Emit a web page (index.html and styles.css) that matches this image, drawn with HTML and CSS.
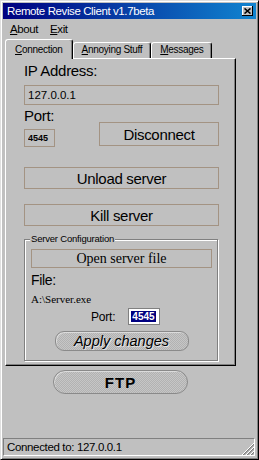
FILE: index.html
```html
<!DOCTYPE html>
<html>
<head>
	<title>Remote Revise Client v1.7beta</title>
	<link rel="stylesheet" href="styles.css">
</head>
<body>
	<div class="window">
		<div class="titlebar">
			<span class="title">Remote Revise Client v1.7beta</span>
			<button type="button" class="close">
				<svg width="7" height="6" viewBox="0 0 7 6"><path d="M0.5 0.5L6.5 5.5M6.5 0.5L0.5 5.5" stroke="#000" stroke-width="1.6" /></svg>
			</button>
		</div>
		<div class="menubar">
			<span class="menu"><u>A</u>bout</span>
			<span class="menu"><u>E</u>xit</span>
		</div>
		<div class="tabs">
			<span class="tab active"><u>C</u>onnection</span>
			<span class="tab"><u>A</u>nnoying Stuff</span>
			<span class="tab"><u>M</u>essages</span>
		</div>
		<div class="panel">
			<div class="label">IP Address:</div>
			<input class="field ip" value="127.0.0.1">
			<div class="portrow">
				<div>
					<div class="label">Port:</div>
					<input class="field port" value="4545">
				</div>
				<button type="button" class="flat disconnect">Disconnect</button>
			</div>
			<button type="button" class="flat wide unload">Unload server</button>
			<button type="button" class="flat wide kill">Kill server</button>
			<fieldset class="config">
				<legend>Server Configuration</legend>
				<button type="button" class="flat open">Open server file</button>
				<div class="file">File:</div>
				<div class="path">A:\Server.exe</div>
				<div class="cfgport">
					<span>Port:</span>
					<span class="box"><mark>4545</mark></span>
				</div>
				<button type="button" class="pill apply">Apply changes</button>
			</fieldset>
		</div>
		<div class="below">
			<button type="button" class="pill ftp">FTP</button>
		</div>
		<div class="status">
			<span>Connected to: 127.0.0.1</span>
			<svg class="grip" width="12" height="12" viewBox="0 0 12 12">
				<path d="M12 1L1 12M12 5L5 12M12 9L9 12" stroke="#808080" stroke-width="1.4" />
				<path d="M12 0L0 12M12 4L4 12M12 8L8 12" stroke="#fff" stroke-width="1" />
			</svg>
		</div>
	</div>
</body>
</html>
```

FILE: styles.css
```css
body {
	margin: 0;
	background-color: #c0c0c0;
	font-family: "Liberation Sans", Arial, sans-serif;
	color: #000;
}

.window {
	width: 259px;
	height: 460px;
	box-sizing: border-box;
	padding: 2px;
	display: flex;
	flex-direction: column;
	border: 1px solid;
	border-color: #dfdfdf #000 #000 #dfdfdf;
	box-shadow: inset 1px 1px #fff, inset -1px -1px #808080;
}

.titlebar {
	height: 16px;
	box-sizing: border-box;
	padding: 1px 3px 0 4px;
	display: flex;
	align-items: center;
	justify-content: space-between;
	background: linear-gradient(to right, #000080, #1084d0);
	color: #fff;
	font-size: 11.5px;
	letter-spacing: -0.4px;
	line-height: 15px;
}

.close {
	width: 11px;
	height: 10px;
	padding: 0;
	border: 0;
	margin-top: -1px;
	display: flex;
	align-items: center;
	justify-content: center;
	background-color: #c0c0c0;
	box-shadow: inset -1px -1px #000, inset 1px 1px #fff;
}

.menubar {
	height: 20px;
	padding-left: 1px;
	display: flex;
	font-size: 11.5px;
	letter-spacing: -0.4px;
	line-height: 20px;
}

	.menu {
		padding: 0 6px;
	}

.tabs {
	height: 19px;
	margin-left: 2px;
	display: flex;
	align-items: flex-end;
	font-size: 10px;
	letter-spacing: -0.3px;
	line-height: 13px;
}

.tab {
	padding: 0 8px 2px;
	border: 1px solid;
	border-bottom: 0;
	border-color: #fff #000 #000 #fff;
	border-radius: 3px 3px 0 0;
	box-shadow: inset -1px 0 #808080;
	background-color: #c0c0c0;
}

	.tab.active {
		position: relative;
		z-index: 1;
		padding: 3px 9px 3px;
		margin-bottom: -1px;
	}

.panel {
	width: 231px;
	box-sizing: border-box;
	margin-left: 2px;
	padding: 2px 16px 4px 18px;
	border: 1px solid;
	border-color: #fff #000 #000 #fff;
	box-shadow: inset -1px -1px #808080;
}

.label {
	font-size: 15px;
	letter-spacing: -0.3px;
	line-height: 20px;
}

.field {
	display: block;
	box-sizing: border-box;
	margin: 0;
	border: 1px solid #a39383;
	background: transparent;
	font-family: "Liberation Sans", Arial, sans-serif;
	color: #000;
	outline: none;
}

.ip {
	width: 100%;
	height: 20px;
	margin-top: 4px;
	padding: 0 3px;
	font-size: 11.5px;
}

.portrow {
	margin-top: 1px;
	display: flex;
	align-items: flex-end;
}

.port {
	width: 31px;
	height: 18px;
	margin-top: 3px;
	padding: 0 3px;
	font-size: 9px;
	font-weight: bold;
}

.flat {
	display: block;
	padding: 0;
	border: 1px solid #a39383;
	background: transparent;
	font-family: "Liberation Sans", Arial, sans-serif;
	font-size: 15px;
	letter-spacing: -0.3px;
	color: #000;
}

.disconnect {
	width: 120px;
	height: 24px;
	margin: 0 0 1px auto;
}

.wide {
	width: 100%;
	height: 22px;
}

.unload {
	margin-top: 20px;
}

.kill {
	margin-top: 15px;
}

.config {
	margin: 7px 1px 0 0;
	padding: 0 5px 9px 6px;
	border: 1px solid #808080;
	box-shadow: 1px 1px #fff, inset 1px 1px #fff;
}

	.config legend {
		padding: 0 1px;
		margin-left: -1px;
		background-color: #c0c0c0;
		font-size: 9.5px;
		letter-spacing: -0.2px;
		line-height: 12px;
	}

.open {
	width: 100%;
	height: 19px;
	margin-top: 4px;
	font-family: "Liberation Serif", "Times New Roman", serif;
	font-size: 14px;
	letter-spacing: 0;
}

.file {
	margin-top: 3px;
	font-size: 14px;
	letter-spacing: -0.3px;
	line-height: 18px;
}

.path {
	margin-top: 4px;
	font-family: "Liberation Serif", "Times New Roman", serif;
	font-size: 11px;
	line-height: 13px;
}

.cfgport {
	height: 17px;
	margin-top: 2px;
	padding-left: 60px;
	display: flex;
	align-items: center;
	gap: 13px;
	font-size: 12px;
	letter-spacing: -0.2px;
}

	.cfgport .box {
		width: 32px;
		height: 17px;
		box-sizing: border-box;
		padding: 2px 0 0 2px;
		border: 1px solid #808080;
		background-color: #fff;
	}

	.cfgport mark {
		display: inline-block;
		padding: 0 1px;
		background-color: #000080;
		color: #fff;
		font-size: 10px;
		font-weight: bold;
		letter-spacing: 0;
		line-height: 11px;
		vertical-align: top;
	}

.pill {
	display: block;
	padding: 0;
	border: 1px solid #8a8a8a;
	background: repeating-conic-gradient(#c6c6c6 0 25%, #b2b2b2 0 50%) 0 0 / 2px 2px;
	box-shadow: inset 1px 1px #dcdcdc;
	color: #000;
	font-family: "Liberation Sans", Arial, sans-serif;
}

.apply {
	width: 134px;
	height: 20px;
	margin: 6px auto 0;
	border-radius: 9px;
	font-size: 14.5px;
	font-style: italic;
	text-shadow: 1px 1px 0 #e6e6e6;
}

.below {
	width: 231px;
	margin: 4px 0 0 2px;
	display: flex;
	justify-content: center;
}

.ftp {
	width: 135px;
	height: 24px;
	border-radius: 12px;
	font-size: 15px;
	font-weight: bold;
	letter-spacing: 1px;
}

.status {
	height: 18px;
	box-sizing: border-box;
	margin: auto 1px 1px 0;
	padding-left: 3px;
	display: flex;
	align-items: flex-end;
	justify-content: space-between;
	border: 1px solid;
	border-color: #808080 #fff #fff #808080;
	font-size: 11.5px;
	letter-spacing: -0.35px;
	line-height: 16px;
}

	.status span {
		align-self: center;
	}
```
